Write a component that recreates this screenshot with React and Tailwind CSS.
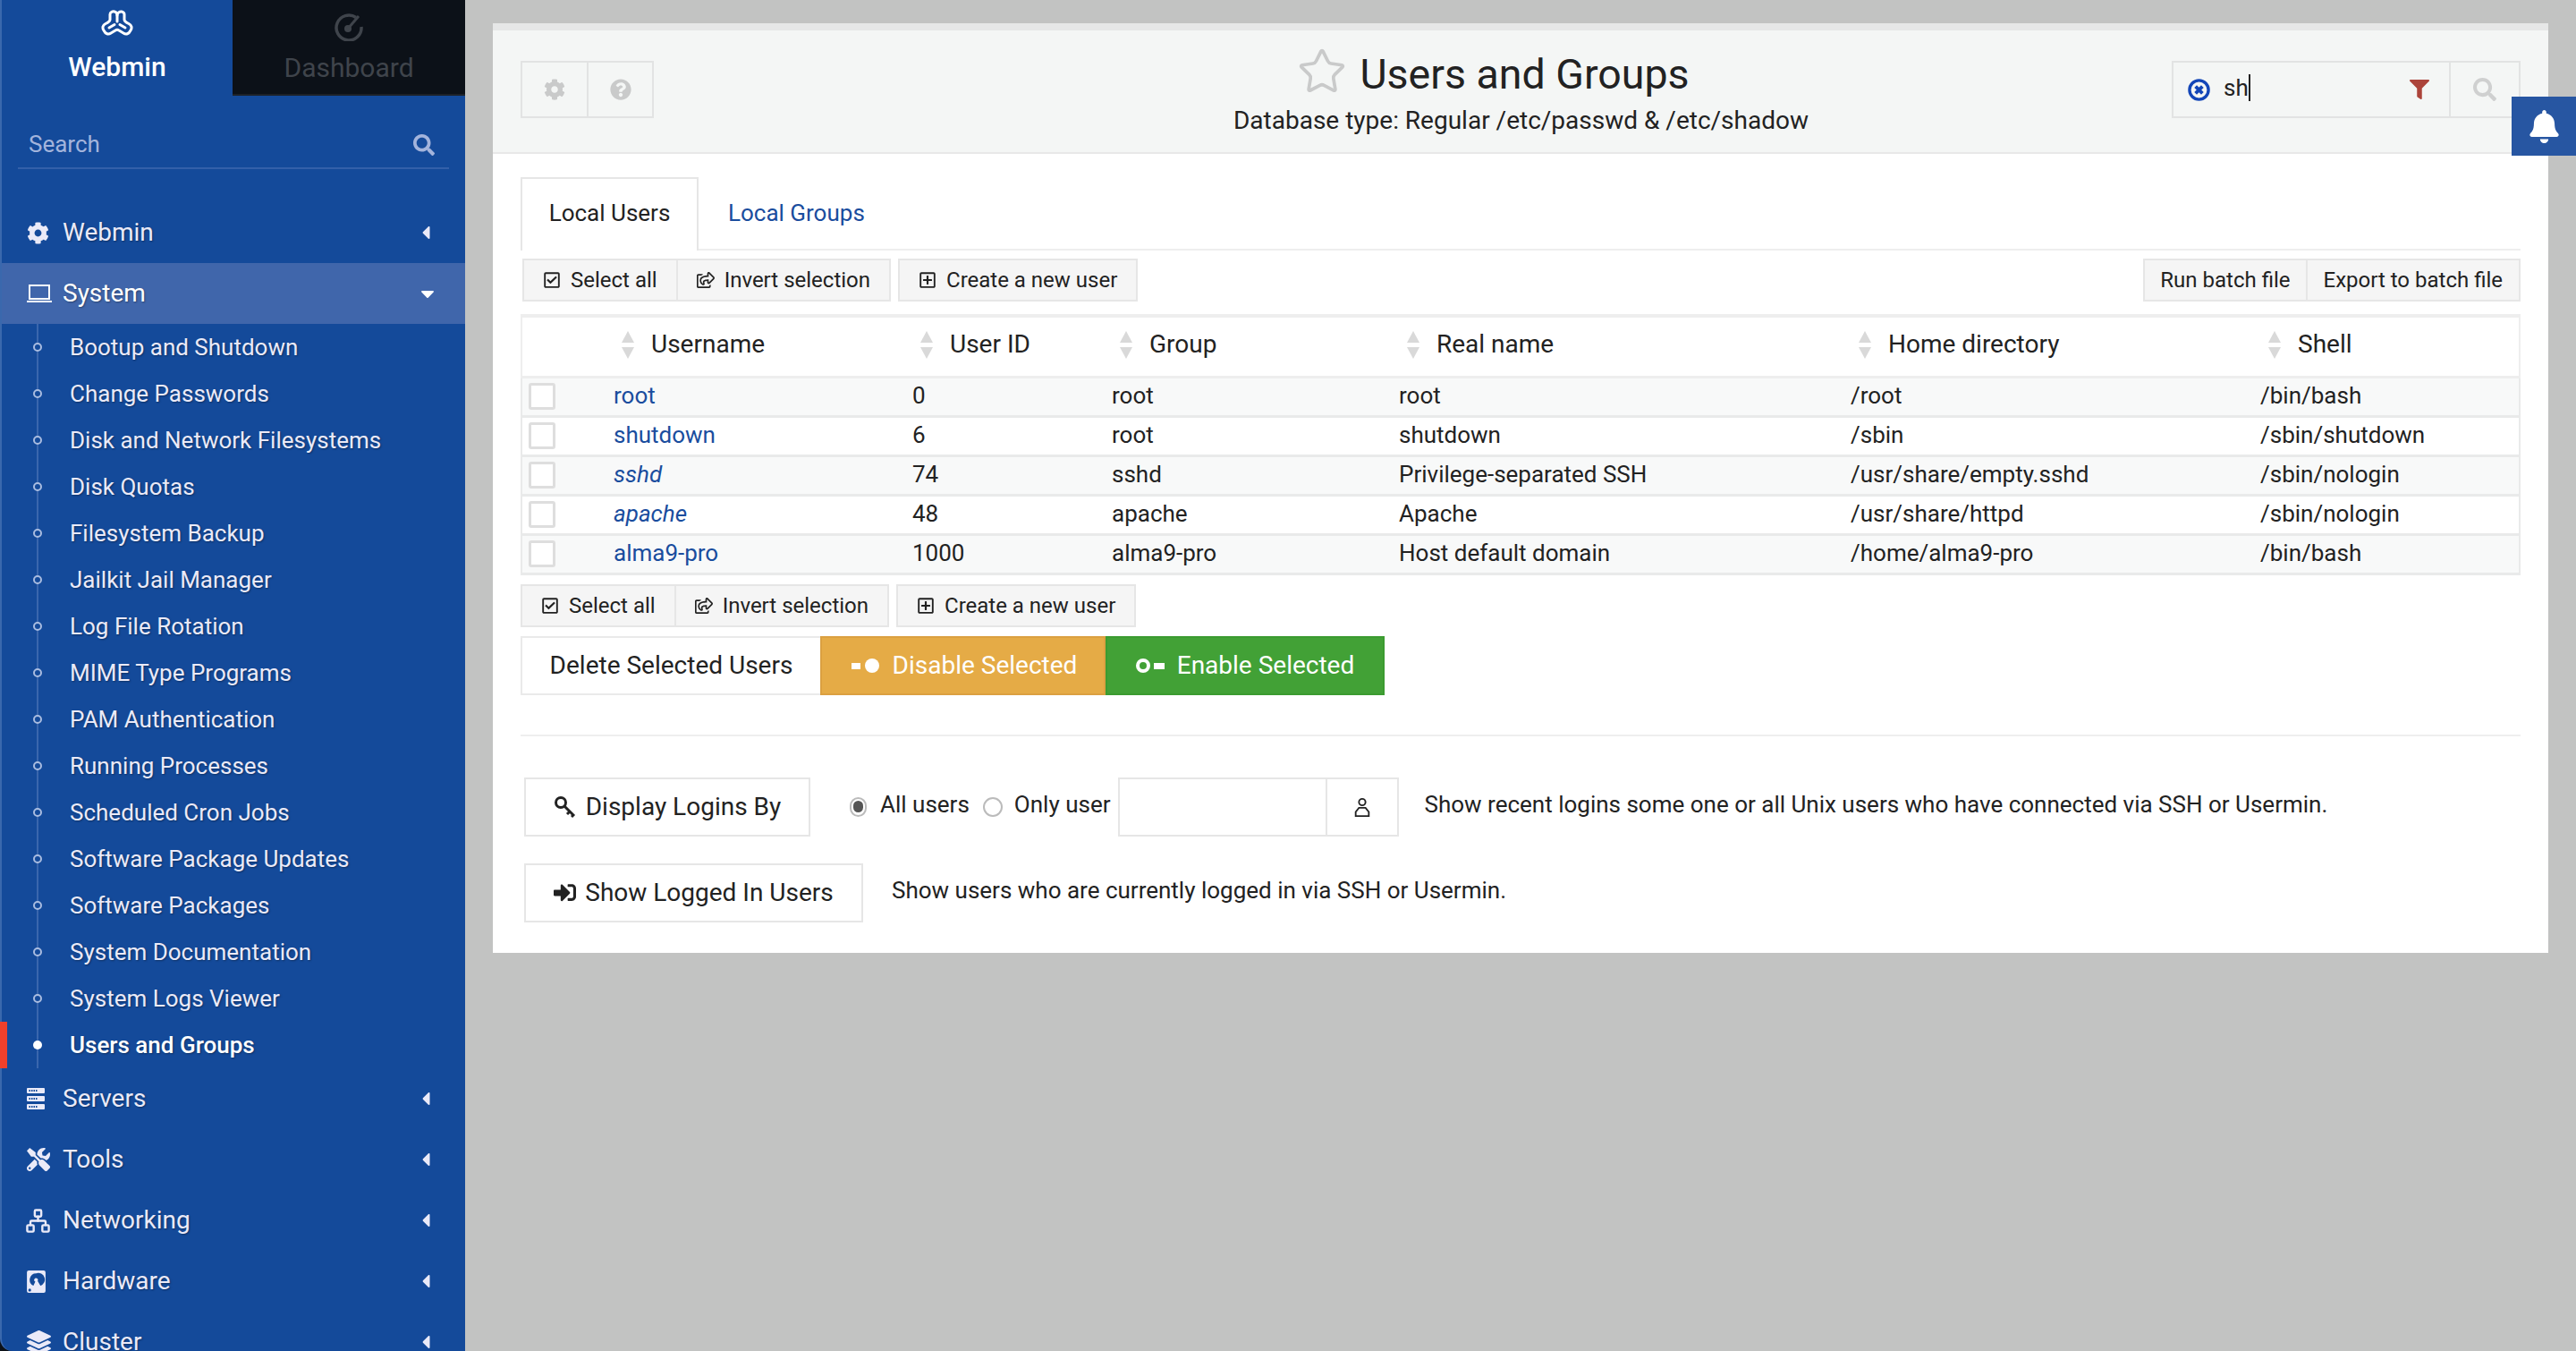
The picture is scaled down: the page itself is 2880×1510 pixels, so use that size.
import React from 'react';
import {
  FaCog, FaQuestionCircle, FaSearch, FaFilter, FaBell, FaRegCheckSquare,
  FaRegShareSquare, FaRegPlusSquare, FaSignInAlt, FaTools,
  FaLayerGroup, FaCaretLeft, FaCaretDown,
} from 'react-icons/fa';
import { Network, Star } from 'lucide-react';

const systemLinks = [
  'Bootup and Shutdown', 'Change Passwords', 'Disk and Network Filesystems', 'Disk Quotas',
  'Filesystem Backup', 'Jailkit Jail Manager', 'Log File Rotation', 'MIME Type Programs',
  'PAM Authentication', 'Running Processes', 'Scheduled Cron Jobs', 'Software Package Updates',
  'Software Packages', 'System Documentation', 'System Logs Viewer', 'Users and Groups',
];

const users = [
  { name: 'root', id: '0', group: 'root', real: 'root', home: '/root', shell: '/bin/bash' },
  { name: 'shutdown', id: '6', group: 'root', real: 'shutdown', home: '/sbin', shell: '/sbin/shutdown' },
  { name: 'sshd', id: '74', group: 'sshd', real: 'Privilege-separated SSH', home: '/usr/share/empty.sshd', shell: '/sbin/nologin', italic: true },
  { name: 'apache', id: '48', group: 'apache', real: 'Apache', home: '/usr/share/httpd', shell: '/sbin/nologin', italic: true },
  { name: 'alma9-pro', id: '1000', group: 'alma9-pro', real: 'Host default domain', home: '/home/alma9-pro', shell: '/bin/bash' },
];

const columns = ['Username', 'User ID', 'Group', 'Real name', 'Home directory', 'Shell'];

// Small drawings that the icon packages don't have in this shape
const HardDisk = () => (
  <svg viewBox="0 0 20 24" className="w-[21px] h-[25px]" fill="currentColor">
    <path fillRule="evenodd" d="M2 0h16a2 2 0 0 1 2 2v20a2 2 0 0 1-2 2H2a2 2 0 0 1-2-2V2a2 2 0 0 1 2-2zm8 3a7 7 0 0 0-3 13.300l2-4.300a2 2 0 1 1 2.500-.8l3 5.200-.2.1A7 7 0 0 0 10 3zM3 19.500a1.500 1.500 0 1 0 0 3 1.500 1.500 0 0 0 0-3z" />
  </svg>
);

const LaptopIcon = () => (
  <svg viewBox="0 0 28 20" className="w-[28px] h-[20px]" fill="none" stroke="currentColor" strokeWidth="2">
    <rect x="3" y="1" width="22" height="15" />
    <path d="M0 19h28" />
  </svg>
);

const ServerIcon = () => (
  <svg viewBox="0 0 20 24" className="w-[20px] h-[24px]">
    {[0, 9, 18].map((y) => (
      <g key={y}>
        <rect x="0" y={y} width="20" height="6" rx="1" fill="currentColor" />
        <path d={`M2.500 ${y + 3}h10`} stroke="#144a9a" strokeWidth="2" strokeDasharray="1.500 1" />
      </g>
    ))}
  </svg>
);

const KeyIcon = () => (
  <svg viewBox="0 0 26 26" className="w-[26px] h-[26px]" fill="none" stroke="currentColor" strokeWidth="3">
    <circle cx="8" cy="8" r="5.500" />
    <path d="M12 12l11 11M18 18l-3 3M22 22l-2 2" />
  </svg>
);

const UserIcon = () => (
  <svg viewBox="0 0 20 24" className="w-[20px] h-[22px]" fill="none" stroke="currentColor" strokeWidth="2">
    <circle cx="10" cy="6" r="4" />
    <path d="M6 13h8l4 5v5H2v-5z" />
  </svg>
);

const ClearIcon = () => (
  <svg viewBox="0 0 26 26" className="w-[25px] h-[25px]" fill="none" stroke="#1346b8">
    <circle cx="13" cy="13" r="11" strokeWidth="3.500" />
    <path d="M9 9l8 8M17 9l-8 8" strokeWidth="4" />
  </svg>
);

const WebminLogo = () => (
  <svg viewBox="0 0 36 32" className="w-[36px] h-[32px]" fill="none" stroke="currentColor" strokeWidth="3" strokeLinejoin="round" strokeLinecap="round">
    <path d="M10 11V5C10 2.500 13 1.500 15 2C17 2.500 18 4 18 6C18 3.500 21 1.500 23 2C25 2.500 26 3 26 5V11C26 13 28 14 31 15.500C34 17 35 20 33 23C31 27 28 28 25 26L20 23C18.500 22 17.500 22 16 23L11 26C8 28 5 27 3 23C1 20 2 17 5 15.500C8 14 10 13 10 11Z" />
    <path d="M18 6V13M9 20L15 16.500M27 20L21 16.500" />
  </svg>
);

const MenuItem = ({ icon, label, active, open }) => (
  <div className={`h-[68px] flex items-center pl-[28px] pr-[36px] text-[28px] text-[#eaeaf8] [text-shadow:1px_1px_2px_rgba(0,0,0,0.35)] ${active ? 'bg-[#4066ab] text-white' : ''}`}>
    <span className="w-[40px] flex justify-start items-center">{icon}</span>
    <span className="flex-1">{label}</span>
    {open ? <FaCaretDown className="text-white text-[24px] mr-[-6px]" /> : <FaCaretLeft className="text-[24px] mr-[-4px]" />}
  </div>
);

const ToolButton = ({ icon, children, className = '' }) => (
  <button className={`h-full px-[21px] flex items-center gap-[11px] bg-[#f5f5f5] text-[24px] text-[#222] ${className}`}>
    {icon}
    {children}
  </button>
);

const SelectRow = ({ className }) => (
  <div className={`flex gap-[8px] ${className}`}>
    <div className="h-[48px] flex border-2 border-[#e6e6e6]">
      <ToolButton icon={<FaRegCheckSquare className="text-[20px]" />} className="border-r-2 border-[#e6e6e6]">Select all</ToolButton>
      <ToolButton icon={<FaRegShareSquare className="text-[20px]" />}>Invert selection</ToolButton>
    </div>
    <div className="h-[48px] flex border-2 border-[#e6e6e6]">
      <ToolButton icon={<FaRegPlusSquare className="text-[20px]" />}>Create a new user</ToolButton>
    </div>
  </div>
);

const SortArrows = () => (
  <span className="flex flex-col items-center gap-[5px] w-[14px] ml-[9px] mr-[19px]">
    <span className="w-0 h-0 border-x-[7px] border-x-transparent border-b-[13px] border-b-[#d9d9d9]" />
    <span className="w-0 h-0 border-x-[7px] border-x-transparent border-t-[13px] border-t-[#d9d9d9]" />
  </span>
);

export default function App() {
  return (
    <div className="relative h-[1510px] w-[2880px] overflow-hidden flex bg-[#c2c3c2] font-['Roboto',sans-serif] text-[#222]">
      {/* Sidebar */}
      <div className="w-[520px] h-full shrink-0 bg-[#0c1118]">
        <aside className="h-full bg-[#144a9a] border-l-2 border-[#3a68ad] rounded-bl-[14px]">
          <div className="flex h-[107px]">
            <div className="w-[258px] flex flex-col items-center pt-[11px] text-white">
              <WebminLogo />
              <span className="text-[30px] font-medium leading-[34px] mt-[15px]">Webmin</span>
            </div>
            <div className="flex-1 bg-[#0c1118] border-b-2 border-[#1d2127] flex flex-col items-center pt-[14px] text-[#3f444b]">
              <svg viewBox="0 0 32 32" className="w-[32px] h-[32px]" fill="none" stroke="currentColor">
                <path strokeWidth="3.500" d="M24 5.500A14 14 0 1 0 30 16" />
                <circle cx="15" cy="18" r="4" fill="currentColor" stroke="none" />
                <path strokeWidth="3" d="M15 18L27 4" />
              </svg>
              <span className="text-[30px] leading-[34px] mt-[13px]">Dashboard</span>
            </div>
          </div>

          <div className="mx-[18px] mt-[35px] h-[47px] pl-[12px] pr-[16px] pb-[6px] flex items-center justify-between border-b-2 border-[#3360a9] text-[#a3b4dc] text-[26px]">
            <span>Search</span>
            <FaSearch className="text-[24px]" />
          </div>

          <nav className="mt-[37px]">
            <MenuItem icon={<FaCog className="text-[25px]" />} label="Webmin" />
            <MenuItem icon={<LaptopIcon />} label="System" active open />
            <div className="relative">
              <div className="absolute left-[39px] top-0 bottom-0 w-[2px] bg-[#3a66ad]" />
              {systemLinks.map((link, i) => {
                const current = i === systemLinks.length - 1;
                return (
                  <div key={link} className={`relative h-[52px] flex items-center pl-[76px] text-[26px] [text-shadow:1px_1px_2px_rgba(0,0,0,0.35)] ${current ? 'font-medium text-white' : 'text-[#eaeaf8]'}`}>
                    {current && <div className="absolute left-[-2px] top-0 bottom-0 w-[8px] bg-[#f0402b]" />}
                    <span className={`absolute left-[35px] w-[10px] h-[10px] rounded-full ${current ? 'bg-white' : 'border-2 border-[#a9bce0] bg-[#144a9a]'}`} />
                    {link}
                  </div>
                );
              })}
            </div>
            <MenuItem icon={<ServerIcon />} label="Servers" />
            <MenuItem icon={<FaTools className="text-[26px]" />} label="Tools" />
            <MenuItem icon={<Network size={29} strokeWidth={2} className="ml-[-2px]" />} label="Networking" />
            <MenuItem icon={<HardDisk />} label="Hardware" />
            <MenuItem icon={<FaLayerGroup className="text-[27px]" />} label="Cluster" />
          </nav>
        </aside>
      </div>

      {/* Main panel */}
      <main className="flex-1 pl-[31px] pr-[31px] pt-[26px]">
        <div className="bg-white border-t-[8px] border-[#e6e7e7]">
          <header className="h-[138px] bg-[#f4f6f5] border-b-2 border-[#e8e8e8] px-[31px] flex items-start pt-[34px]">
            <div className="flex h-[64px] border-2 border-[#e2e3e3] text-[#c9caca] text-[24px]">
              <div className="w-[74px] flex items-center justify-center border-r-2 border-[#e2e3e3]"><FaCog /></div>
              <div className="w-[71px] flex items-center justify-center"><FaQuestionCircle /></div>
            </div>
            <div className="flex-1 ml-[250px] flex flex-col items-center mt-[-16px]">
              <div className="flex items-center gap-[14px] h-[64px] mr-[70px]">
                <Star size={56} strokeWidth={1.6} strokeLinejoin="miter" className="text-[#c9caca] mt-[-8px]" />
                <h1 className="text-[46.500px] text-[#222]">Users and Groups</h1>
              </div>
              <p className="text-[28px] leading-[34px] mt-[2px] ml-[-8px]">Database type: Regular /etc/passwd &amp; /etc/shadow</p>
            </div>
            <div className="flex h-[64px] border-2 border-[#e2e3e3]">
              <div className="w-[310px] flex items-center pl-[16px] pr-[22px] border-r-2 border-[#e2e3e3]">
                <ClearIcon />
                <span className="ml-[15px] mt-[-4px] text-[26px] flex-1 flex items-center">sh<span className="w-[2px] h-[30px] bg-[#222]" /></span>
                <FaFilter className="text-[22px] text-[#ac443a]" />
              </div>
              <div className="w-[76px] flex items-center justify-center text-[#cfd0d0] text-[26px]"><FaSearch /></div>
            </div>
          </header>

          <div className="px-[31px] pt-[26px] pb-[34px]">
            {/* Tabs */}
            <div className="flex h-[82px] border-b-2 border-[#eeeeee] text-[26px]">
              <div className="w-[199px] h-[82px] pb-[4px] flex items-center justify-center bg-white border-2 border-b-0 border-[#e6e6e6]">Local Users</div>
              <div className="ml-[33px] flex items-center text-[#1a4d9e]">Local Groups</div>
            </div>

            <div className="flex justify-between pl-[2px] mt-[9px]">
              <SelectRow />
              <div className="h-[48px] flex border-2 border-[#e6e6e6]">
                <ToolButton className="border-r-2 border-[#e6e6e6] !px-[17px]">Run batch file</ToolButton>
                <ToolButton className="!px-[18px]">Export to batch file</ToolButton>
              </div>
            </div>

            {/* Users table */}
            <table className="mt-[14px] w-[2236px] table-fixed border-collapse text-[26px] leading-[30px]">
              <colgroup>
                <col className="w-[103px]" />
                <col className="w-[334px]" />
                <col className="w-[223px]" />
                <col className="w-[321px]" />
                <col className="w-[505px]" />
                <col className="w-[458px]" />
                <col />
              </colgroup>
              <thead>
                <tr className="h-[68px] border-t-4 border-x-2 border-b-[3px] border-[#eeeeee]">
                  <th />
                  {columns.map((col) => (
                    <th key={col} className="font-normal text-left text-[28px] pb-[4px]">
                      <span className="flex items-center"><SortArrows />{col}</span>
                    </th>
                  ))}
                </tr>
              </thead>
              <tbody>
                {users.map((u, i) => (
                  <tr key={u.name} className={`h-[44px] border-x-2 border-b-[3px] border-[#e9eaea] ${i % 2 === 0 ? 'bg-[#f8f9f9]' : 'bg-white'}`}>
                    <td className="pl-[7px]">
                      <span className="block h-[30px] w-[30px] rounded-[3px] border-[3px] border-[#dedede] bg-white" />
                    </td>
                    <td className={`pb-[3px] text-[#1a4d9e] ${u.italic ? 'italic' : ''}`}>{u.name}</td>
                    <td className="pb-[3px]">{u.id}</td>
                    <td className="pb-[3px]">{u.group}</td>
                    <td className="pb-[3px]">{u.real}</td>
                    <td className="pb-[3px]">{u.home}</td>
                    <td className="pb-[3px]">{u.shell}</td>
                  </tr>
                ))}
              </tbody>
            </table>

            <SelectRow className="mt-[10px]" />

            <div className="flex h-[66px] mt-[10px] text-[28px]">
              <button className="w-[335px] bg-white border-2 border-[#eaeaea] border-r-0">Delete Selected Users</button>
              <button className="w-[319px] pl-[3px] bg-[#e5ab46] border-2 border-[#dba041] text-white flex items-center justify-center gap-[14px]">
                <svg viewBox="0 0 32 16" className="w-[32px] h-[16px]" fill="currentColor"><rect x="0" y="5" width="10" height="7" /><circle cx="23" cy="8" r="8" /></svg>
                Disable Selected
              </button>
              <button className="w-[312px] bg-[#42a136] border-2 border-[#3b9b30] text-white flex items-center justify-center gap-[14px]">
                <svg viewBox="0 0 32 16" className="w-[32px] h-[16px]" fill="currentColor"><circle cx="8" cy="8" r="6" fill="none" stroke="currentColor" strokeWidth="4" /><rect x="20" y="5" width="12" height="7" /></svg>
                Enable Selected
              </button>
            </div>

            <div className="mt-[44px] border-t-2 border-[#eeeeee]" />

            <div className="flex items-center mt-[46px] pl-[4px] h-[66px] text-[26px]">
              <button className="w-[320px] h-full border-2 border-[#e6e6e6] flex items-center justify-center gap-[10px] text-[28px]">
                <KeyIcon />
                Display Logins By
              </button>
              <span className="ml-[44px] w-[19px] h-[22px] rounded-full border-2 border-[#bbbbbb] flex items-center justify-center">
                <span className="w-[11px] h-[13px] rounded-full bg-[#555]" />
              </span>
              <span className="ml-[15px] mb-[4px]">All users</span>
              <span className="ml-[15px] w-[22px] h-[22px] rounded-full border-2 border-[#bbbbbb]" />
              <span className="ml-[13px] mb-[4px]">Only user</span>
              <div className="ml-[8px] h-full flex border-2 border-[#e6e6e6]">
                <div className="w-[232px] border-r-2 border-[#e6e6e6]" />
                <div className="w-[78px] flex items-center justify-center"><UserIcon /></div>
              </div>
              <span className="ml-[29px] mb-[4px]">Show recent logins some one or all Unix users who have connected via SSH or Usermin.</span>
            </div>

            <div className="flex items-center mt-[30px] pl-[4px] h-[66px] text-[26px]">
              <button className="w-[379px] h-full border-2 border-[#e6e6e6] flex items-center justify-center gap-[10px] text-[28px]">
                <FaSignInAlt className="text-[25px]" />
                Show Logged In Users
              </button>
              <span className="ml-[32px] mb-[4px]">Show users who are currently logged in via SSH or Usermin.</span>
            </div>
          </div>
        </div>
      </main>

      {/* Notifications tab */}
      <div className="absolute left-[2808px] top-[108px] w-[72px] h-[66px] bg-[#2756a2] flex items-center justify-center text-white">
        <FaBell className="text-[37px]" />
      </div>
    </div>
  );
}
